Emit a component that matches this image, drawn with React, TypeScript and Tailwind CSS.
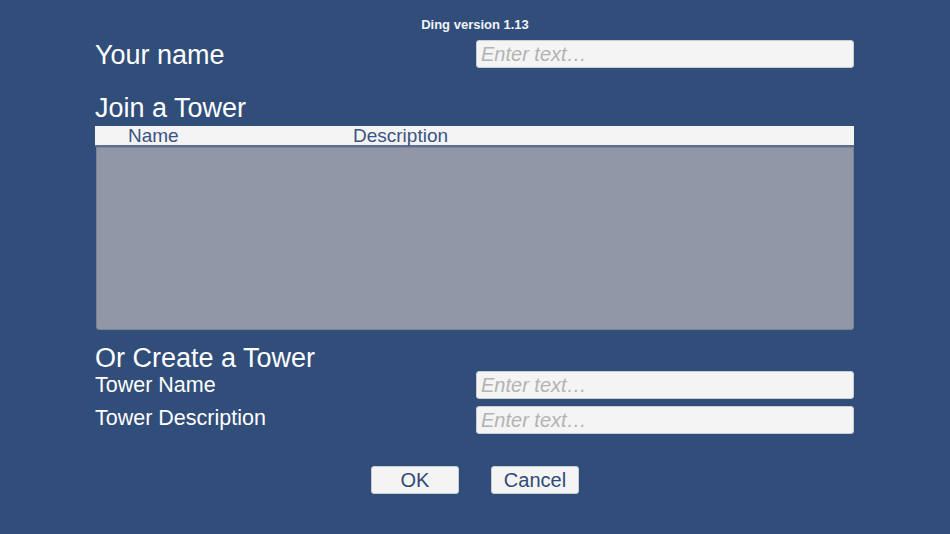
import { useState } from 'react';

const TextField = ({ value, onChange }: { value: string; onChange: (v: string) => void }) => (
    <input
        value={value}
        onChange={(e) => onChange(e.target.value)}
        placeholder="Enter text…"
        className="w-[378px] h-[28px] pl-[4px] bg-[#f4f4f4] border border-[#c9ccd2] rounded-[3px] text-[20px] text-[#333] italic placeholder:text-[#b3b3b3] outline-none"
    />
);

export default function App() {
    const [name, setName] = useState('');
    const [towerName, setTowerName] = useState('');
    const [towerDesc, setTowerDesc] = useState('');

    return (
        <div className="w-[950px] h-[534px] bg-[#314d7a] text-white font-['Liberation_Sans',Arial,sans-serif] overflow-hidden">
            <div className="pt-[17px] text-center text-[13px] leading-[16px] font-bold text-[#f2f4f8]">
                Ding version 1.13
            </div>

            <div className="pl-[95px] pr-[96px]">
                {/* Your name */}
                <div className="mt-[7px] flex items-center justify-between h-[28px]">
                    <span className="text-[27px] leading-[32px] mt-[2px]">Your name</span>
                    <TextField value={name} onChange={setName} />
                </div>

                {/* Join a tower */}
                <div className="mt-[24px] text-[27px] leading-[32px]">Join a Tower</div>
                <div className="mt-[2px] h-[21px] bg-[#f4f4f4] border-b-2 border-[#5c6f90] flex items-center text-[19px] leading-[20px] text-[#3b5383]">
                    <span className="pl-[33px] w-[258px]">Name</span>
                    <span>Description</span>
                </div>
                <div className="ml-[1px] h-[183px] bg-[#9197a7] border border-[#7b8397] rounded-b-[3px]"></div>

                {/* Create a tower */}
                <div className="mt-[15px] text-[27px] leading-[26px]">Or Create a Tower</div>
                <div className="flex items-center justify-between h-[28px]">
                    <span className="text-[21.5px] leading-[26px]">Tower Name</span>
                    <TextField value={towerName} onChange={setTowerName} />
                </div>
                <div className="mt-[7px] flex items-center justify-between h-[28px]">
                    <span className="text-[21.5px] leading-[26px] -mt-[4px]">Tower Description</span>
                    <TextField value={towerDesc} onChange={setTowerDesc} />
                </div>

                <div className="mt-[32px] flex justify-center gap-[32px] pl-[1px]">
                    <button className="w-[88px] h-[28px] bg-[#f4f4f4] border border-[#c9ccd2] rounded-[3px] text-[20px] leading-[26px] text-[#2f4a78]">
                        OK
                    </button>
                    <button className="w-[88px] h-[28px] bg-[#f4f4f4] border border-[#c9ccd2] rounded-[3px] text-[20px] leading-[26px] text-[#2f4a78]">
                        Cancel
                    </button>
                </div>
            </div>
        </div>
    );
}
